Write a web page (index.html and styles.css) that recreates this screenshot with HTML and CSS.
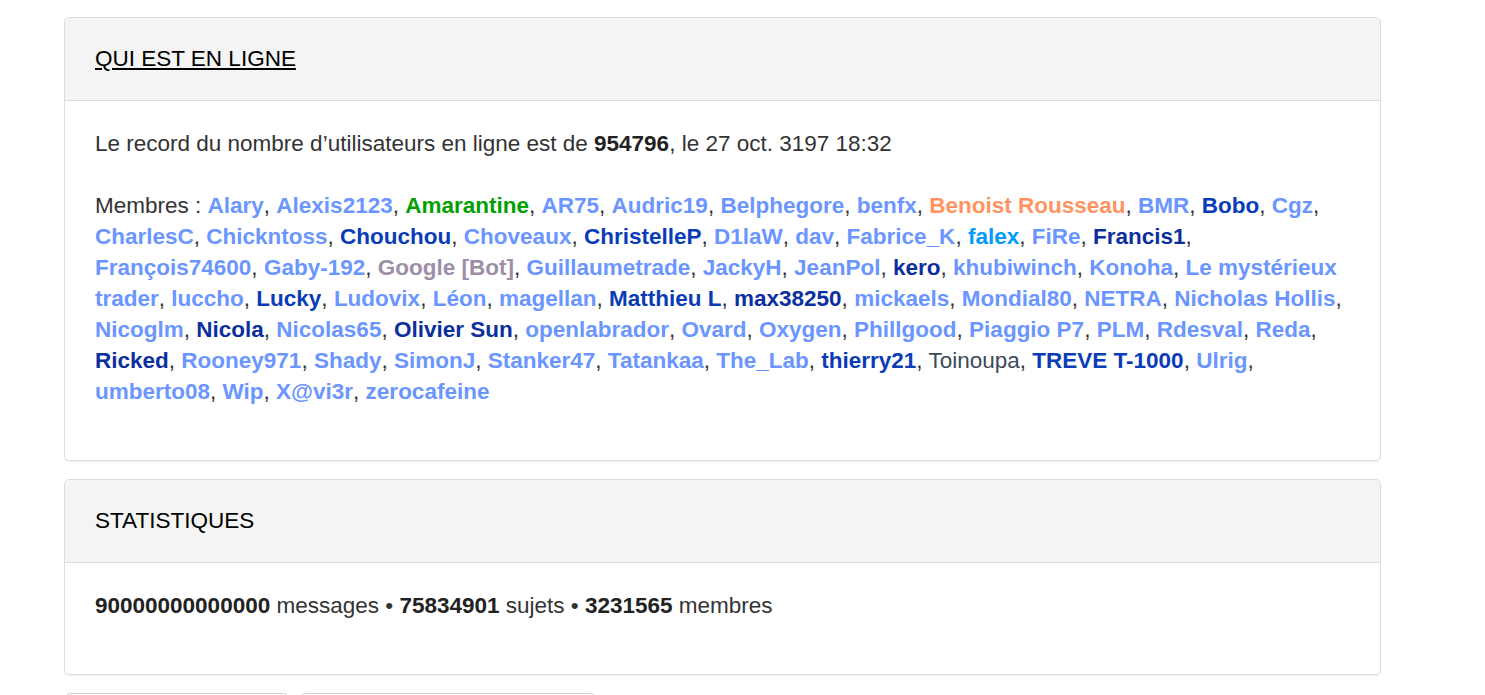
FILE: index.html
```html
<!DOCTYPE html>
<html lang="fr">
<head>
<meta charset="utf-8">
<title>Qui est en ligne</title>
<link rel="stylesheet" href="styles.css">
</head>
<body>
<div class="page">
  <section class="panel">
    <h3 class="panel-head"><a href="#" class="head-link">QUI EST EN LIGNE</a></h3>
    <div class="panel-body">
      <p class="line">Le record du nombre d’utilisateurs en ligne est de <strong>954796</strong>, le 27 oct. 3197 18:32</p>
      <p class="line members">Membres : <a class="u lb">Alary</a>, <a class="u lb">Alexis2123</a>, <a class="u gr">Amarantine</a>, <a class="u lb">AR75</a>, <a class="u lb">Audric19</a>, <a class="u lb">Belphegore</a>, <a class="u lb">benfx</a>, <a class="u or">Benoist Rousseau</a>, <a class="u lb">BMR</a>, <a class="u db">Bobo</a>, <a class="u lb">Cgz</a>, <a class="u lb">CharlesC</a>, <a class="u lb">Chickntoss</a>, <a class="u db">Chouchou</a>, <a class="u lb">Choveaux</a>, <a class="u db">ChristelleP</a>, <a class="u lb">D1laW</a>, <a class="u lb">dav</a>, <a class="u lb">Fabrice_K</a>, <a class="u cy">falex</a>, <a class="u lb">FiRe</a>, <a class="u nv">Francis1</a>, <a class="u lb">François74600</a>, <a class="u lb">Gaby-192</a>, <a class="u bot">Google [Bot]</a>, <a class="u lb">Guillaumetrade</a>, <a class="u lb">JackyH</a>, <a class="u lb">JeanPol</a>, <a class="u nv">kero</a>, <a class="u lb">khubiwinch</a>, <a class="u lb">Konoha</a>, <a class="u lb">Le mystérieux trader</a>, <a class="u lb">luccho</a>, <a class="u db">Lucky</a>, <a class="u lb">Ludovix</a>, <a class="u lb">Léon</a>, <a class="u lb">magellan</a>, <a class="u db">Matthieu L</a>, <a class="u nv">max38250</a>, <a class="u lb">mickaels</a>, <a class="u lb">Mondial80</a>, <a class="u lb">NETRA</a>, <a class="u lb">Nicholas Hollis</a>, <a class="u lb">Nicoglm</a>, <a class="u nv">Nicola</a>, <a class="u lb">Nicolas65</a>, <a class="u nv">Olivier Sun</a>, <a class="u lb">openlabrador</a>, <a class="u lb">Ovard</a>, <a class="u lb">Oxygen</a>, <a class="u lb">Phillgood</a>, <a class="u lb">Piaggio P7</a>, <a class="u lb">PLM</a>, <a class="u lb">Rdesval</a>, <a class="u lb">Reda</a>, <a class="u nv">Ricked</a>, <a class="u lb">Rooney971</a>, <a class="u lb">Shady</a>, <a class="u lb">SimonJ</a>, <a class="u lb">Stanker47</a>, <a class="u lb">Tatankaa</a>, <a class="u lb">The_Lab</a>, <a class="u db">thierry21</a>, <a class="plain">Toinoupa</a>, <a class="u db">TREVE T-1000</a>, <a class="u lb">Ulrig</a>, <a class="u lb">umberto08</a>, <a class="u lb">Wip</a>, <a class="u lb">X@vi3r</a>, <a class="u lb">zerocafeine</a></p>
    </div>
  </section>

  <section class="panel">
    <h3 class="panel-head">STATISTIQUES</h3>
    <div class="panel-body">
      <p class="line"><strong>90000000000000</strong> messages • <strong>75834901</strong> sujets • <strong>3231565</strong> membres</p>
    </div>
  </section>

  <div class="actions">
    <span class="btn btn-a"></span>
    <span class="btn btn-b"></span>
  </div>
</div>
</body>
</html>
```

FILE: styles.css
```css
html, body {
  margin: 0;
  padding: 0;
  background: #ffffff;
}

body {
  font-family: "Liberation Sans", Arial, sans-serif;
  color: #333333;
  overflow: hidden;
}

.page {
  width: 1317px;
  padding: 17px 0 0 64px;
  display: flex;
  flex-direction: column;
  gap: 18px;
}

.panel {
  border: 1px solid #dcdcdc;
  border-radius: 5px;
  background: #ffffff;
  box-shadow: 0 1px 2px rgba(0, 0, 0, 0.06);
  overflow: hidden;
}

.panel-head {
  margin: 0;
  padding: 30px 30px;
  background: #f4f4f4;
  border-bottom: 1px solid #dcdcdc;
  font-size: 22.5px;
  line-height: 22px;
  font-weight: normal;
  color: #000000;
}

.head-link {
  color: #000000;
  text-decoration: underline;
  text-underline-offset: 2px;
}

.panel-body {
  padding: 27px 30px 53px;
  font-size: 22.5px;
  line-height: 31px;
}

.line {
  margin: 0;
}

.line + .line {
  margin-top: 31px;
}

.line strong {
  color: #222222;
}

.u {
  font-weight: bold;
  text-decoration: none;
  cursor: pointer;
}

.lb { color: #6b96ff; }
.db { color: #0a3cb8; }
.nv { color: #0c2fa0; }
.gr { color: #00a000; }
.or { color: #ff9461; }
.cy { color: #009bff; }
.bot { color: #9d8ea8; }

.plain {
  color: #3c4a5a;
  font-weight: normal;
}

.actions {
  display: flex;
  gap: 13px;
  padding-left: 2px;
}

.btn {
  display: block;
  height: 40px;
  border: 1px solid #cfcfcf;
  border-radius: 4px;
  background: #ffffff;
}

.btn-a { width: 220px; }
.btn-b { width: 292px; }
```
